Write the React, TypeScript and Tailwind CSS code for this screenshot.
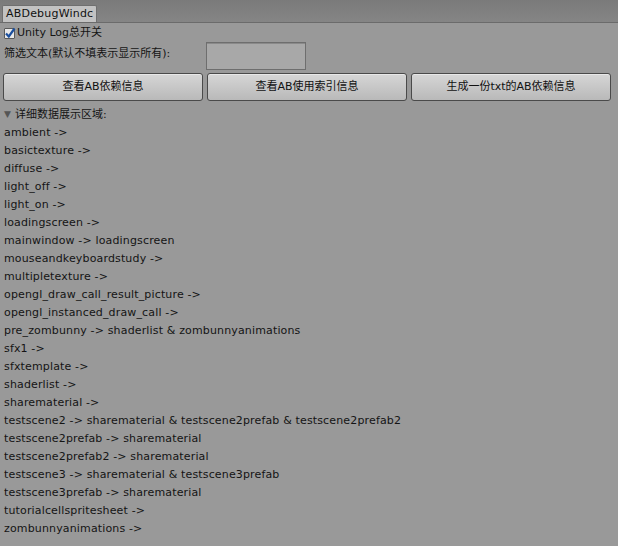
import React from 'react';

const LINES = [
  'ambient ->',
  'basictexture ->',
  'diffuse ->',
  'light_off ->',
  'light_on ->',
  'loadingscreen ->',
  'mainwindow -> loadingscreen',
  'mouseandkeyboardstudy ->',
  'multipletexture ->',
  'opengl_draw_call_result_picture ->',
  'opengl_instanced_draw_call ->',
  'pre_zombunny -> shaderlist & zombunnyanimations',
  'sfx1 ->',
  'sfxtemplate ->',
  'shaderlist ->',
  'sharematerial ->',
  'testscene2 -> sharematerial & testscene2prefab & testscene2prefab2',
  'testscene2prefab -> sharematerial',
  'testscene2prefab2 -> sharematerial',
  'testscene3 -> sharematerial & testscene3prefab',
  'testscene3prefab -> sharematerial',
  'tutorialcellspritesheet ->',
  'zombunnyanimations ->',
];

const BUTTONS = ['查看AB依赖信息', '查看AB使用索引信息', '生成一份txt的AB依赖信息'];

function UnityButton({ label }: { label: string }) {
  return (
    <button className="h-[28px] w-[200px] rounded-[3px] border border-[#4a4a4a] bg-gradient-to-b from-[#d6d6d6] to-[#b9b9b9] text-[11px] text-[#111] shadow-[inset_0_1px_0_#e8e8e8]">
      {label}
    </button>
  );
}

export default function App() {
  return (
    <div
      className="w-[618px] h-[546px] bg-[#999999] text-[#141414] text-[11px] overflow-hidden flex flex-col"
      style={{ fontFamily: '"DejaVu Sans", "Noto Sans CJK SC", sans-serif' }}
    >
      {/* Tab strip */}
      <div className="h-[23px] bg-gradient-to-b from-[#7a7a7a] to-[#858585] border-b border-[#6b6b6b] flex items-end pl-[2px] shrink-0">
        <div className="h-[17px] w-[95px] bg-[#c2c2c2] border border-b-0 border-[#6f6f6f] rounded-t-[2px] px-[3px] leading-[16px] text-[11px] tracking-[0.2px] text-[#111] overflow-hidden whitespace-nowrap">
          ABDebugWindc
        </div>
      </div>

      {/* Log toggle */}
      <div className="flex items-center h-[16px] mt-[2px] pl-[4px]">
        <span className="w-[11px] h-[11px] bg-[#e8e8e8] border border-[#5a5a5a] rounded-[1px] relative mr-[2px]">
          <svg viewBox="0 0 12 12" className="absolute -left-[1px] -top-[2px] w-[12px] h-[12px]">
            <path d="M2 6.5 L4.8 9.5 L10.5 1.5" fill="none" stroke="#1b4f9e" strokeWidth="2.2" />
          </svg>
        </span>
        <span>Unity Log总开关</span>
      </div>

      {/* Filter */}
      <div className="flex items-start h-[30px] mt-[1px] pl-[4px]">
        <span className="w-[202px] pt-[4px]">筛选文本(默认不填表示显示所有):</span>
        <div className="w-[100px] h-[28px] border border-[#6e6e6e] bg-[#a8a8a8] shadow-[inset_0_1px_0_#8a8a8a]" />
      </div>

      {/* Action buttons */}
      <div className="flex gap-[4px] pl-[3px] mt-[1px]">
        {BUTTONS.map((b) => (
          <UnityButton key={b} label={b} />
        ))}
      </div>

      {/* Foldout */}
      <div className="flex items-center h-[18px] mt-[5px] pl-[4px]">
        <span className="text-[#555] text-[9px] mr-[4px]">▼</span>
        <span>详细数据展示区域:</span>
      </div>

      <div className="flex flex-col pl-[4px] tracking-[0.15px]">
        {LINES.map((l) => (
          <div key={l} className="h-[18px] leading-[18px] whitespace-nowrap">
            {l}
          </div>
        ))}
      </div>
    </div>
  );
}
